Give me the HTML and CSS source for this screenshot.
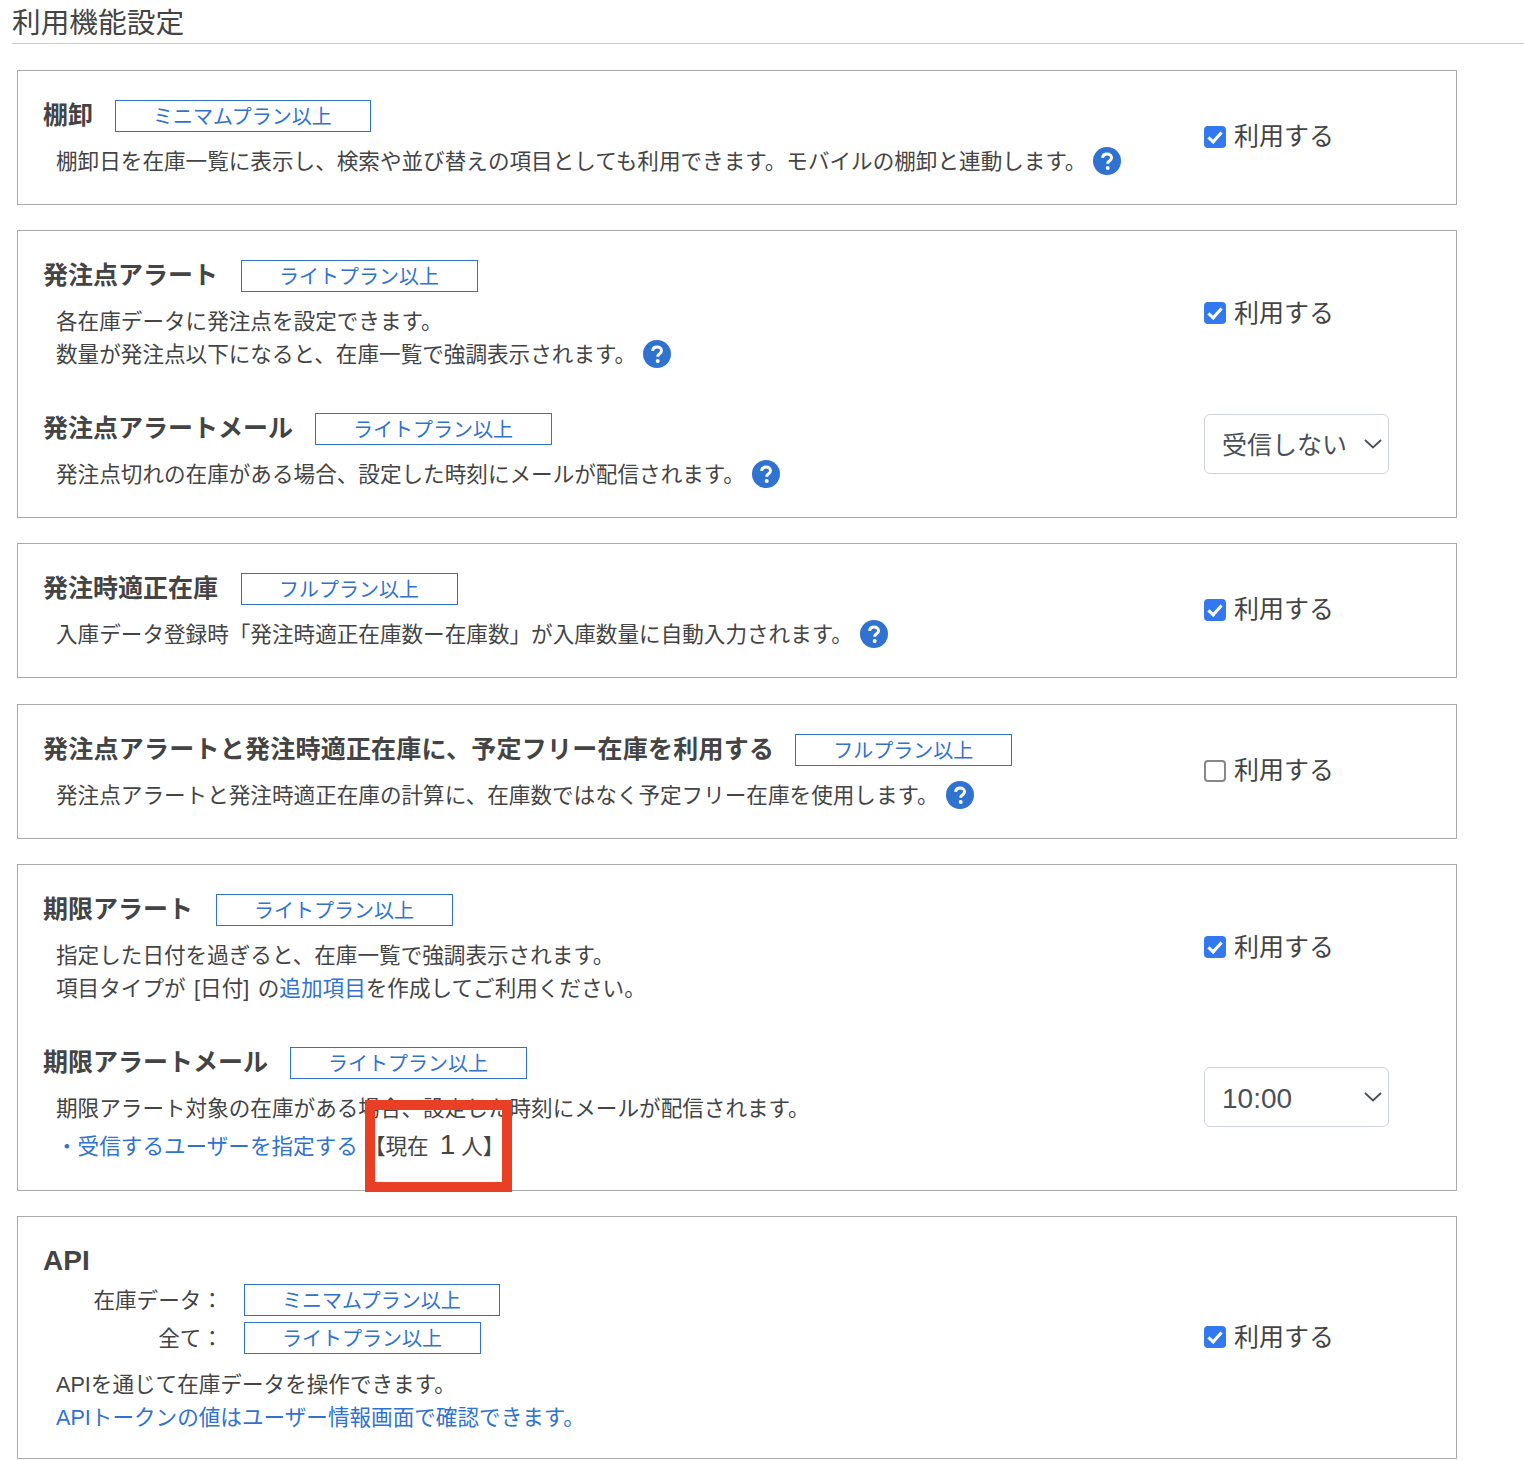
FILE: index.html
```html
<!DOCTYPE html>
<html lang="ja">

<head>
    <meta charset="UTF-8">
    <meta name="viewport" content="width=device-width, initial-scale=1.0">
    <title>利用機能設定</title>
    <link rel="stylesheet" href="styles.css">
</head>

<body>

    <svg class="defs">
        <symbol id="help" viewBox="0 0 28 28">
            <circle cx="14" cy="14" r="14" fill="#2f72d0"/>
            <path d="M9.6 10.9c.2-2.5 2-3.900 4.500-3.900 2.600 0 4.400 1.500 4.400 3.700 0 1.700-1 2.600-2.100 3.300-1.100.7-1.600 1.200-1.600 2.300v.4" fill="none" stroke="#fff" stroke-width="3"/>
            <circle cx="14.700" cy="21" r="2" fill="#fff"/>
        </symbol>
        <symbol id="chevron" viewBox="0 0 18 10">
            <path d="M1 1l8 7.500 8-7.500" fill="none" stroke="#495057" stroke-width="1.800"/>
        </symbol>
    </svg>

    <h1 class="page-title">利用機能設定</h1>

    <div class="card">
        <div class="row">
            <div class="info">
                <div class="head"><h2 class="tight">棚卸</h2><span class="plan">ミニマムプラン以上</span></div>
                <p class="desc">棚卸日を在庫一覧に表示し、検索や並び替えの項目としても利用できます。モバイルの棚卸と連動します。<svg class="help"><use href="#help"/></svg></p>
            </div>
            <label class="check"><input type="checkbox" checked>利用する</label>
        </div>
    </div>

    <div class="card">
        <div class="row">
            <div class="info">
                <div class="head"><h2>発注点アラート</h2><span class="plan">ライトプラン以上</span></div>
                <p class="desc">各在庫データに発注点を設定できます。<br>数量が発注点以下になると、在庫一覧で強調表示されます。<svg class="help"><use href="#help"/></svg></p>
            </div>
            <label class="check"><input type="checkbox" checked>利用する</label>
        </div>
        <div class="row sub">
            <div class="info">
                <div class="head"><h2 class="tight">発注点アラートメール</h2><span class="plan">ライトプラン以上</span></div>
                <p class="desc">発注点切れの在庫がある場合、設定した時刻にメールが配信されます。<svg class="help"><use href="#help"/></svg></p>
            </div>
            <div class="select-wrap">
                <select><option>受信しない</option></select>
                <svg class="chevron"><use href="#chevron"/></svg>
            </div>
        </div>
    </div>

    <div class="card wide-gap">
        <div class="row">
            <div class="info">
                <div class="head"><h2>発注時適正在庫</h2><span class="plan">フルプラン以上</span></div>
                <p class="desc">入庫データ登録時「発注時適正在庫数ー在庫数」が入庫数量に自動入力されます。<svg class="help"><use href="#help"/></svg></p>
            </div>
            <label class="check"><input type="checkbox" checked>利用する</label>
        </div>
    </div>

    <div class="card">
        <div class="row">
            <div class="info">
                <div class="head"><h2 class="long">発注点アラートと発注時適正在庫に、予定フリー在庫を利用する</h2><span class="plan">フルプラン以上</span></div>
                <p class="desc">発注点アラートと発注時適正在庫の計算に、在庫数ではなく予定フリー在庫を使用します。<svg class="help"><use href="#help"/></svg></p>
            </div>
            <label class="check"><input type="checkbox">利用する</label>
        </div>
    </div>

    <div class="card">
        <div class="row">
            <div class="info">
                <div class="head"><h2>期限アラート</h2><span class="plan">ライトプラン以上</span></div>
                <p class="desc">指定した日付を過ぎると、在庫一覧で強調表示されます。<br>項目タイプが [日付] の<a href="#">追加項目</a>を作成してご利用ください。</p>
            </div>
            <label class="check"><input type="checkbox" checked>利用する</label>
        </div>
        <div class="row sub">
            <div class="info">
                <div class="head"><h2 class="tight">期限アラートメール</h2><span class="plan">ライトプラン以上</span></div>
                <p class="desc">期限アラート対象の在庫がある場合、設定した時刻にメールが配信されます。</p>
                <p class="desc users"><a href="#">・受信するユーザーを指定する</a><span class="count">【現在<b>1</b>人】</span></p>
            </div>
            <div class="select-wrap">
                <select class="time"><option>10:00</option></select>
                <svg class="chevron"><use href="#chevron"/></svg>
            </div>
        </div>
        <div class="highlight"></div>
    </div>

    <div class="card api">
        <div class="row">
            <div class="info">
                <h2 class="api-title">API</h2>
                <div class="api-plan"><span class="api-label">在庫データ：</span><span class="plan">ミニマムプラン以上</span></div>
                <div class="api-plan"><span class="api-label">全て：</span><span class="plan">ライトプラン以上</span></div>
                <p class="desc">APIを通じて在庫データを操作できます。<br><a href="#">APIトークンの値はユーザー情報画面で確認できます。</a></p>
            </div>
            <label class="check"><input type="checkbox" checked>利用する</label>
        </div>
    </div>

</body>

</html>
```

FILE: styles.css
```css
body {
    margin: 0;
    font-family: "Liberation Sans", "Noto Sans CJK JP", sans-serif;
    color: #444;
    background: white;
}

a {
    color: #2f72d0;
    text-decoration: none;
}

.defs {
    display: none;
}

/* Title */
.page-title {
    margin: 0 0 26px 12px;
    height: 43px;
    line-height: 46px;
    font-size: 28.7px;
    font-weight: normal;
    border-bottom: 1px solid #ccc;
}

/* Cards */
.card {
    position: relative;
    width: 1438px;
    margin: 0 0 25px 17px;
    padding: 29px 0 25.8px;
    border: 1px solid #aaa;
}

.card.wide-gap {
    margin-bottom: 26px;
}

.card.api {
    margin-bottom: 0;
    padding-bottom: 24px;
}

.row {
    display: flex;
    align-items: center;
}

.row.sub {
    margin-top: 41.3px;
}

.info {
    flex: 1;
    padding-left: 26px;
}

.head {
    display: flex;
    align-items: center;
    gap: 23px;
}

.head h2,
.api-title {
    margin: 0 0 2px;
    font-size: 25px;
    line-height: 30px;
    text-indent: -1px;
}

.head h2.tight {
    margin-right: -1px;
}

.head h2.long {
    margin-right: -2px;
    letter-spacing: 0.24px;
}

.plan {
    box-sizing: border-box;
    height: 32px;
    line-height: 32px;
    padding: 0 38px 0 37px;
    font-size: 20px;
    color: #2f72d0;
    border: 1px solid #2f72d0;
}

.desc {
    margin: 12.7px 0 0 12px;
    font-size: 21.6px;
    line-height: 33.5px;
    word-spacing: 2.5px;
}

.help {
    width: 28px;
    height: 28px;
    margin-left: 7px;
    vertical-align: -6px;
}

.users {
    margin-top: 4px;
    line-height: 35px;
}

.count {
    margin-left: 6px;
}

.count b {
    margin: 0 6px 0 11px;
    font-size: 28px;
    line-height: 1;
    font-weight: normal;
}

/* Right column */
.check {
    display: flex;
    align-items: center;
    gap: 8px;
    width: 252px;
    margin-bottom: 10px;
    font-size: 25px;
}

.check input {
    appearance: none;
    box-sizing: border-box;
    position: relative;
    width: 22px;
    height: 22px;
    margin: 5px 0 0;
    border: 2px solid #888;
    border-radius: 4px;
    background: white;
}

.check input:checked {
    border-color: #3478f0;
    background: #3478f0;
}

.check input:checked::before {
    content: "";
    position: absolute;
    left: 5px;
    top: 1px;
    width: 5px;
    height: 11px;
    border: solid white;
    border-width: 0 3px 3px 0;
    transform: rotate(42deg);
}

.select-wrap {
    position: relative;
    width: 252px;
    height: 60px;
    margin-bottom: 17px;
}

.select-wrap select {
    appearance: none;
    width: 185px;
    height: 60px;
    padding: 2px 0 0 17px;
    font-family: inherit;
    font-size: 25px;
    color: #495057;
    background: white;
    border: 1px solid #ced4da;
    border-radius: 6px;
}

.select-wrap select.time {
    font-size: 28px;
}

.chevron {
    position: absolute;
    left: 160px;
    top: 25px;
    width: 18px;
    height: 10px;
}

/* Red annotation */
.highlight {
    position: absolute;
    left: 347px;
    top: 235px;
    box-sizing: border-box;
    width: 147px;
    height: 92px;
    border: 10px solid #e93f25;
}

/* API */
.api-title {
    font-size: 28px;
    margin-bottom: 8px;
}

.api-plan {
    display: flex;
    align-items: center;
    gap: 21px;
    height: 32px;
    margin-bottom: 6px;
}

.api-label {
    width: 179px;
    margin-bottom: 2px;
    text-align: right;
    font-size: 21.6px;
}

.api-plan + .desc {
    margin-top: 14px;
    line-height: 33px;
}
```
